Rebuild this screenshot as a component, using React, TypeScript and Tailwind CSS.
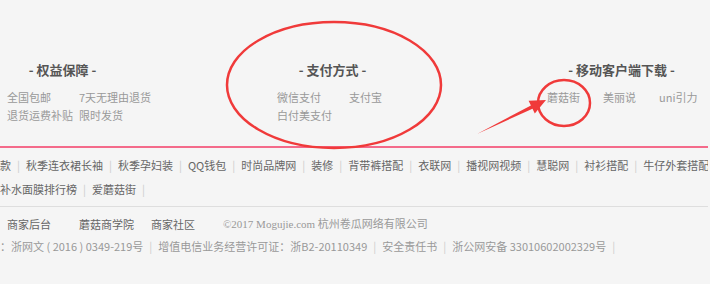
import React from "react";

const font = { fontFamily: '"Noto Sans CJK SC", "Noto Sans", sans-serif' };

function Col({ title, titleW, itemW, cols, items }: { title: string; titleW: string; itemW: string; cols: string; items: string[] }) {
  return (
    <div className="w-[270px] shrink-0">
      <div className={`${titleW} text-center text-[13px] leading-[18px] font-bold text-[#555]`}>- {title} -</div>
      <div className={`mt-[9px] grid ${cols} text-[11px] leading-[18px] text-[#999]`}>
        {items.map((t, i) => (
          <div key={i} className={`${itemW} whitespace-nowrap`}>{t}</div>
        ))}
      </div>
    </div>
  );
}

const row1 = ["款", "秋季连衣裙长袖", "秋季孕妇装", "QQ钱包", "时尚品牌网", "装修", "背带裤搭配", "衣联网", "播视网视频", "慧聪网", "衬衫搭配", "牛仔外套搭配"];
const row2 = ["补水面膜排行榜", "爱蘑菇街"];

function Sep() {
  return <span className="mx-[6px] text-[#ccc]">|</span>;
}

export default function App() {
  return (
    <div className="relative w-[710px] h-[284px] overflow-hidden bg-[#f5f5f5]" style={font}>
      <div className="w-[708px] h-[284px] overflow-hidden">
        <div className="flex pl-[7px] pt-[61px] h-[146px]">
          <Col title="权益保障" titleW="w-[111px]" itemW="w-[72px]" cols="grid-cols-[72px_72px]" items={["全国包邮", "7天无理由退货", "退货运费补贴", "限时发货"]} />
          <Col title="支付方式" titleW="w-[111px]" itemW="w-[72px]" cols="grid-cols-[72px_72px]" items={["微信支付", "支付宝", "白付美支付"]} />
          <Col title="移动客户端下载" titleW="w-[149px]" itemW="w-[56px]" cols="grid-cols-[56px_56px_56px]" items={["蘑菇街", "美丽说", "uni引力"]} />
        </div>
        <div className="h-[2px] bg-[#f46a8a]" />
        <div className="pt-[5px] text-[11px] leading-[24px] text-[#666] whitespace-nowrap">
          <div>
            {row1.map((t, i) => (
              <React.Fragment key={i}>
                {i > 0 && <Sep />}
                <span>{t}</span>
              </React.Fragment>
            ))}
          </div>
          <div>
            {row2.map((t, i) => (
              <React.Fragment key={i}>
                {i > 0 && <Sep />}
                <span>{t}</span>
              </React.Fragment>
            ))}
            <Sep />
          </div>
        </div>
        <div className="mt-[5px] h-px bg-[#dedede]" />
        <div className="pt-[6px] text-[11px] whitespace-nowrap">
          <div className="flex leading-[22px] pl-[7px] text-[#666]">
            <span className="w-[72px]">商家后台</span>
            <span className="w-[72px]">蘑菇商学院</span>
            <span className="w-[72px]">商家社区</span>
            <span className="text-[#999]" style={{ fontFamily: '"Liberation Serif", "Noto Sans CJK SC", serif' }}>©2017 Mogujie.com 杭州卷瓜网络有限公司</span>
          </div>
          <div className="leading-[22px] text-[#999]">
            <span>：浙网文 ( 2016 ) 0349-219号</span>
            <Sep />
            <span>增值电信业务经营许可证：浙B2-20110349</span>
            <Sep />
            <span>安全责任书</span>
            <Sep />
            <span>浙公网安备 33010602002329号</span>
            <Sep />
          </div>
        </div>
      </div>
      <svg className="absolute left-0 top-0 pointer-events-none" width="710" height="284" viewBox="0 0 710 284">
        <ellipse cx="334" cy="85" rx="107" ry="63" fill="none" stroke="#f03a3a" strokeWidth="2.5" />
        <ellipse cx="564" cy="103" rx="26" ry="23" fill="none" stroke="#f03a3a" strokeWidth="2.5" />
        <polygon points="477,134 530.9,105.5 528.6,100.8 546,100 534.8,113.4 532.5,108.7" fill="#f03a3a" />
      </svg>
    </div>
  );
}
